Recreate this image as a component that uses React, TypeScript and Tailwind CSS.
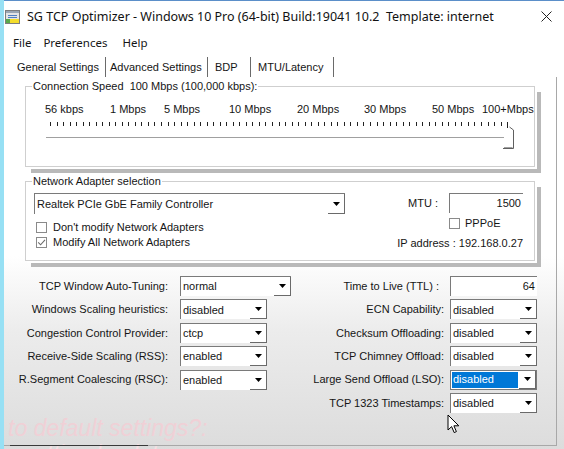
import React from "react";

const body = "font-['Liberation_Sans',Arial,sans-serif]";
const ui = "font-['Noto_Sans','Open_Sans',sans-serif]";

function DownArrow() {
  return (
    <svg width="7" height="4" viewBox="0 0 7 4">
      <path d="M0 0H7L3.5 4Z" fill="#000" />
    </svg>
  );
}

function Combo({ value, width = "w-[87px]", selected = false }: { value: string; width?: string; selected?: boolean }) {
  return (
    <div className={`flex h-[20px] ${width} border-l border-t border-[#7a7a7a] bg-white ${selected ? "border-r border-b" : ""}`}>
      <div className="flex flex-1 items-center p-[1px]">
        <span className={selected ? "flex h-full flex-1 items-center bg-[#0078d7] pl-[1px] text-white" : "pl-[1px]"}>{value}</span>
      </div>
      <div className="flex w-[17px] items-center justify-center border-b border-r border-[#6a6a6a]">
        <DownArrow />
      </div>
    </div>
  );
}

function Check({ checked = false }: { checked?: boolean }) {
  return (
    <div className="flex h-[11px] w-[11px] shrink-0 items-center justify-center border border-[#8a8a8a] bg-white">
      {checked && (
        <svg width="9" height="9" viewBox="0 0 9 9">
          <path d="M1.2 4.3L3.6 6.8L8 1.8" fill="none" stroke="#6b6b6b" strokeWidth="1.1" />
        </svg>
      )}
    </div>
  );
}

function AppIcon() {
  return (
    <svg width="15" height="14" viewBox="0 0 15 14">
      <rect x="0.5" y="0.5" width="14" height="13" fill="#e4e4e4" stroke="#7d7d7d" />
      <rect x="1" y="1" width="13" height="2" fill="#9aa6b4" />
      <path d="M3 5.5H12M3 7.5H12" stroke="#4f7fc0" />
      <rect x="1" y="9" width="4" height="4" fill="#5aa84a" />
      <rect x="5" y="9" width="9" height="4" fill="#f4dd2c" />
    </svg>
  );
}

function Slider() {
  const ticks = Array.from({ length: 71 }, (_, i) => 24 + i * 6.53);
  return (
    <svg width="500" height="44" viewBox="0 0 500 44" className="block">
      {ticks.map((x, i) => (
        <line key={i} x1={Math.round(x) + 0.5} x2={Math.round(x) + 0.5} y1="6" y2={i === 70 ? "12" : "10"} stroke="#222" />
      ))}
      <line x1="20" x2="478" y1="21.5" y2="21.5" stroke="#a0a0a0" />
      <line x1="20" x2="478" y1="22.5" y2="22.5" stroke="#fff" />
      <path d="M477 32.5H487.5V14L483.5 11" fill="none" stroke="#606060" />
      <path d="M478 31.5H486.5" stroke="#a0a0a0" />
    </svg>
  );
}

function Cursor() {
  return (
    <svg width="14" height="21" viewBox="0 0 14 21">
      <path d="M1 1V16L4.6 12.6L7.2 18.6L9.4 17.6L6.9 11.8H11.8Z" fill="#fff" stroke="#000" strokeLinejoin="round" />
    </svg>
  );
}

const leftRows: [string, string, string?][] = [
  ["TCP Window Auto-Tuning:", "normal", "w-[111px]"],
  ["Windows Scaling heuristics:", "disabled"],
  ["Congestion Control Provider:", "ctcp"],
  ["Receive-Side Scaling (RSS):", "enabled"],
  ["R.Segment Coalescing (RSC):", "enabled"],
];

const rightRows: [string, string][] = [
  ["ECN Capability:", "disabled"],
  ["Checksum Offloading:", "disabled"],
  ["TCP Chimney Offload:", "disabled"],
  ["Large Send Offload (LSO):", "disabled"],
  ["TCP 1323 Timestamps:", "disabled"],
];

const speeds: [string, string][] = [
  ["56 kbps", "w-[65px]"],
  ["1 Mbps", "w-[54px]"],
  ["5 Mbps", "w-[65px]"],
  ["10 Mbps", "w-[68px]"],
  ["20 Mbps", "w-[67px]"],
  ["30 Mbps", "w-[68px]"],
  ["50 Mbps", "w-[50px]"],
  ["100+Mbps", ""],
];

export default function App() {
  return (
    <div className={`relative flex h-[449px] w-[564px] overflow-hidden whitespace-nowrap bg-white text-[11px] text-[#151515] ${body}`}>
      <div className="w-[4px] shrink-0 bg-[#97e0f4]" />
      <div className="flex flex-1 flex-col border-t border-[#5b8fc9] bg-[linear-gradient(to_bottom,#fff_0px,#fff_255px,#ececec_330px,#dcdcdc_449px)]">
        {/* title bar */}
        <div className={`flex h-[31px] shrink-0 items-center ${ui}`}>
          <div className="ml-[1px] mt-[1px]">
            <AppIcon />
          </div>
          <div className="ml-[7px] mt-[1px] text-[12.5px] text-[#111]">
            SG TCP Optimizer - Windows 10 Pro (64-bit) Build:19041 10.2&nbsp; Template: internet
          </div>
          <div className="ml-auto mr-[12px]">
            <svg width="11" height="11" viewBox="0 0 11 11">
              <path d="M0.5 0.5L10.5 10.5M10.5 0.5L0.5 10.5" stroke="#222" />
            </svg>
          </div>
        </div>

        {/* menu */}
        <div className={`flex h-[22px] shrink-0 items-center gap-[12px] pl-[9px] text-[11.5px] ${ui}`}>
          <span>File</span>
          <span>Preferences</span>
          <span className="ml-[3px]">Help</span>
        </div>

        {/* tabs */}
        <div className="mt-[3px] flex h-[20px] shrink-0 items-stretch pl-[9px]">
          <div className="flex w-[93px] items-center border-r border-[#6a6a6a] pl-[4px]">General Settings</div>
          <div className="flex w-[102px] items-center border-r border-[#6a6a6a] pl-[4px]">Advanced Settings</div>
          <div className="flex w-[43px] items-center border-r border-[#6a6a6a] pl-[7px]">BDP</div>
          <div className="flex w-[83px] items-center border-r border-[#6a6a6a] pl-[7px]">MTU/Latency</div>
        </div>

        {/* tab page */}
        <div className="mb-[3px] mr-[7px] flex flex-1 flex-col border-b border-r border-[#a8a8a8] pl-[10px] pt-[2px]">
          <fieldset className="ml-[11px] mr-[21px] border border-[#cfcfcf] bg-white px-0 pb-[6px] shadow-[2px_2px_0_#fff,6px_6px_0_#b9b9b9]">
            <legend className="ml-[6px] px-[1px] leading-[14px]">Connection Speed&nbsp; 100 Mbps (100,000 kbps):</legend>
            <div className="mt-[9px] flex h-[14px] items-center pl-[19px] leading-[14px]">
              {speeds.map(([s, w]) => (
                <span key={s} className={`shrink-0 ${w}`}>
                  {s}
                </span>
              ))}
            </div>
            <Slider />
          </fieldset>

          <fieldset className="ml-[11px] mr-[21px] mt-[7px] border border-[#cfcfcf] bg-white px-0 pb-[12px] shadow-[2px_2px_0_#fff,6px_6px_0_#b9b9b9]">
            <legend className="ml-[6px] px-[1px] leading-[14px]">Network Adapter selection</legend>
            <div className="mt-[5px] flex items-start justify-between pl-[8px] pr-[11px]">
              <div className="flex flex-col">
                <Combo value="Realtek PCIe GbE Family Controller" width="w-[311px] h-[21px]" />
                <div className="mt-[8px] flex h-[11px] items-center gap-[6px] pl-[2px]">
                  <Check />
                  <span>Don't modify Network Adapters</span>
                </div>
                <div className="mt-[4px] flex h-[11px] items-center gap-[6px] pl-[2px]">
                  <Check checked />
                  <span>Modify All Network Adapters</span>
                </div>
              </div>
              <div className="flex h-[55px] flex-col items-end">
                <div className="flex items-center gap-[11px]">
                  <span>MTU :</span>
                  <div className="flex h-[20px] w-[74px] items-center justify-end border-l border-t border-[#7a7a7a] bg-white pr-[2px]">1500</div>
                </div>
                <div className="mt-[5px] flex h-[11px] w-[74px] items-center gap-[5px]">
                  <Check />
                  <span>PPPoE</span>
                </div>
                <div className="mt-[7px] leading-[14px]">IP address : 192.168.0.27</div>
              </div>
            </div>
          </fieldset>

          <div className="mt-[15px] flex">
            <div className="flex w-[283px] flex-col gap-[3.4px]">
              {leftRows.map(([label, value, w]) => (
                <div key={label} className="flex h-[20px] items-center">
                  <span className="w-[154px] text-right">{label}</span>
                  <div className="ml-[12px]">
                    <Combo value={value} width={w ?? "w-[87px]"} />
                  </div>
                </div>
              ))}
            </div>
            <div className="flex flex-col gap-[3.4px]">
              <div className="flex h-[20px] items-center">
                <span className="w-[142px] text-right">Time to Live (TTL) :</span>
                <div className="ml-[11px] flex h-[20px] w-[87px] items-center justify-end border-l border-t border-[#7a7a7a] bg-white pr-[2px]">64</div>
              </div>
              {rightRows.map(([label, value], i) => (
                <div key={label} className="flex h-[20px] items-center">
                  <span className="w-[147px] text-right">{label}</span>
                  <div className="ml-[6px]">
                    <Combo value={value} selected={i === 3} />
                  </div>
                </div>
              ))}
            </div>
          </div>
        </div>
      </div>

      {/* faded video overlay text */}
      <div className="pointer-events-none absolute left-[8px] top-[415px] text-[23px] italic leading-[26px] text-[#f0d0d6]">
        to default settings?:
      </div>
      <div className="pointer-events-none absolute left-[22px] top-[441px] text-[23px] italic leading-[26px] text-[#f5e0e4]">
        setting back to
      </div>
      <div className="absolute left-[10px] top-[445px] h-[1px] w-[138px] bg-[#3a3a3a]" />

      <div className="absolute left-[447px] top-[414px]">
        <Cursor />
      </div>
    </div>
  );
}
